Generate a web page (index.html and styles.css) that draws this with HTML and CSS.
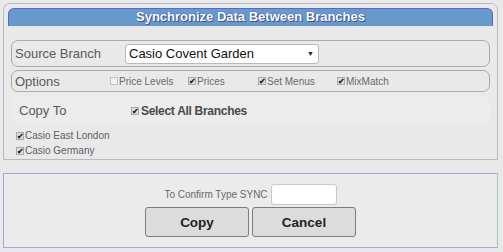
FILE: index.html
```html
<!DOCTYPE html>
<html>
<head>
<meta charset="utf-8">
<link rel="stylesheet" href="styles.css">
</head>
<body>
<div class="panel">
  <div class="header">Synchronize Data Between Branches</div>
  <div class="row source">
    <span class="label">Source Branch</span>
    <div class="select"><span>Casio Covent Garden</span><span class="arrow">▼</span></div>
  </div>
  <div class="row options">
    <span class="label">Options</span>
    <span class="opt o1"><span class="cb"></span>Price Levels</span>
    <span class="opt o2"><span class="cb on">✔</span>Prices</span>
    <span class="opt o3"><span class="cb on">✔</span>Set Menus</span>
    <span class="opt o4"><span class="cb on">✔</span>MixMatch</span>
  </div>
  <div class="copyto">
    <span class="label">Copy To</span>
    <span class="all"><span class="cb on">✔</span>Select All Branches</span>
  </div>
  <div class="branches">
    <div class="branch"><span class="cb on">✔</span>Casio East London</div>
    <div class="branch"><span class="cb on">✔</span>Casio Germany</div>
  </div>
</div>
<div class="confirm">
  <div class="confirm-line">
    <span class="confirm-text">To Confirm Type SYNC</span>
    <span class="input"></span>
  </div>
  <div class="buttons">
    <div class="btn">Copy</div>
    <div class="btn">Cancel</div>
  </div>
</div>
</body>
</html>
```
FILE: styles.css
```css
html, body {
  margin: 0;
  padding: 0;
  background: #e9e9e9;
  font-family: "Liberation Sans", Arial, sans-serif;
}
body {
  padding: 3px;
  width: 501px;
  height: 252px;
  box-sizing: border-box;
}
.panel {
  height: 157px;
  box-sizing: border-box;
  border: 1px solid #b7b7c6;
  border-radius: 7px 7px 0 0;
  padding: 4px 4px 0 4px;
}
.header {
  height: 18px;
  box-sizing: border-box;
  background: #6699cc;
  border: 1px solid #6262d6;
  border-bottom: none;
  border-radius: 6px 6px 0 0;
  color: #fff;
  font-weight: bold;
  font-size: 13px;
  line-height: 16px;
  text-align: center;
  text-shadow: 0 0 1px #334488, 1px 1px 0 #44549a;
}
.row {
  margin: 0 3px;
  border: 1px solid #a9a9a9;
  border-radius: 7px;
  display: flex;
  align-items: center;
  box-sizing: border-box;
  padding-left: 3px;
}
.source {
  margin-top: 14px;
  height: 27px;
}
.options {
  margin-top: 3px;
  height: 22px;
}
.label {
  font-size: 13px;
  color: #5a5a5a;
}
.source .label { width: 110px; }
.options .label { width: 95px; }
.select {
  width: 194px;
  height: 20px;
  box-sizing: border-box;
  background: #fff;
  border: 1px solid #b9b9b9;
  border-radius: 3px;
  display: flex;
  align-items: center;
  justify-content: space-between;
  padding: 0 4px 0 3px;
  font-size: 13px;
  color: #111;
}
.arrow {
  font-size: 7px;
  color: #222;
}
.opt {
  font-size: 10px;
  color: #6a6a6a;
  display: inline-flex;
  align-items: center;
}
.o1 { width: 78px; }
.o2 { width: 70px; }
.o3 { width: 79px; }
.cb {
  display: inline-block;
  width: 8px;
  height: 8px;
  box-sizing: border-box;
  border: 1px solid #c2c2c2;
  background: #f2f2f2;
  font-size: 8px;
  line-height: 7px;
  text-align: center;
  color: #222;
  margin-right: 1px;
  overflow: hidden;
  flex: none;
}
.cb.on {
  border-color: #aaa;
  background: #ddd;
  font-weight: bold;
}
.copyto {
  margin: 4px 3px 0;
  height: 29px;
  background: #ececec;
  border-radius: 7px;
  display: flex;
  align-items: center;
  padding-left: 8px;
}
.copyto .label { width: 112px; }
.all {
  font-size: 12px;
  letter-spacing: -0.3px;
  font-weight: bold;
  color: #4a4a4a;
  display: inline-flex;
  align-items: center;
}
.all .cb { margin-right: 2px; letter-spacing: 0; }
.branches {
  padding: 3px 0 0 8px;
}
.branch {
  font-size: 10px;
  color: #5e5e66;
  line-height: 15px;
  display: flex;
  align-items: center;
}
.confirm {
  margin-top: 13px;
  height: 75px;
  box-sizing: border-box;
  border: 1px solid #a6a6de;
  border-right-color: #8fcaca;
  background: #ebebeb;
  display: flex;
  flex-direction: column;
  align-items: center;
  padding-top: 10px;
}
.confirm-line {
  display: flex;
  align-items: center;
  gap: 3px;
}
.confirm-text {
  font-size: 10px;
  color: #6a6a6a;
}
.input {
  display: inline-block;
  width: 66px;
  height: 21px;
  box-sizing: border-box;
  background: #fff;
  border: 1px solid #c8c8c8;
  border-radius: 3px;
}
.buttons {
  display: flex;
  gap: 3px;
  margin-top: 2px;
}
.btn {
  width: 104px;
  height: 30px;
  box-sizing: border-box;
  border: 1px solid #7d7d7d;
  border-radius: 3px;
  background: #dcdcdc;
  font-size: 13.5px;
  font-weight: bold;
  color: #222;
  display: flex;
  align-items: center;
  justify-content: center;
}
```
